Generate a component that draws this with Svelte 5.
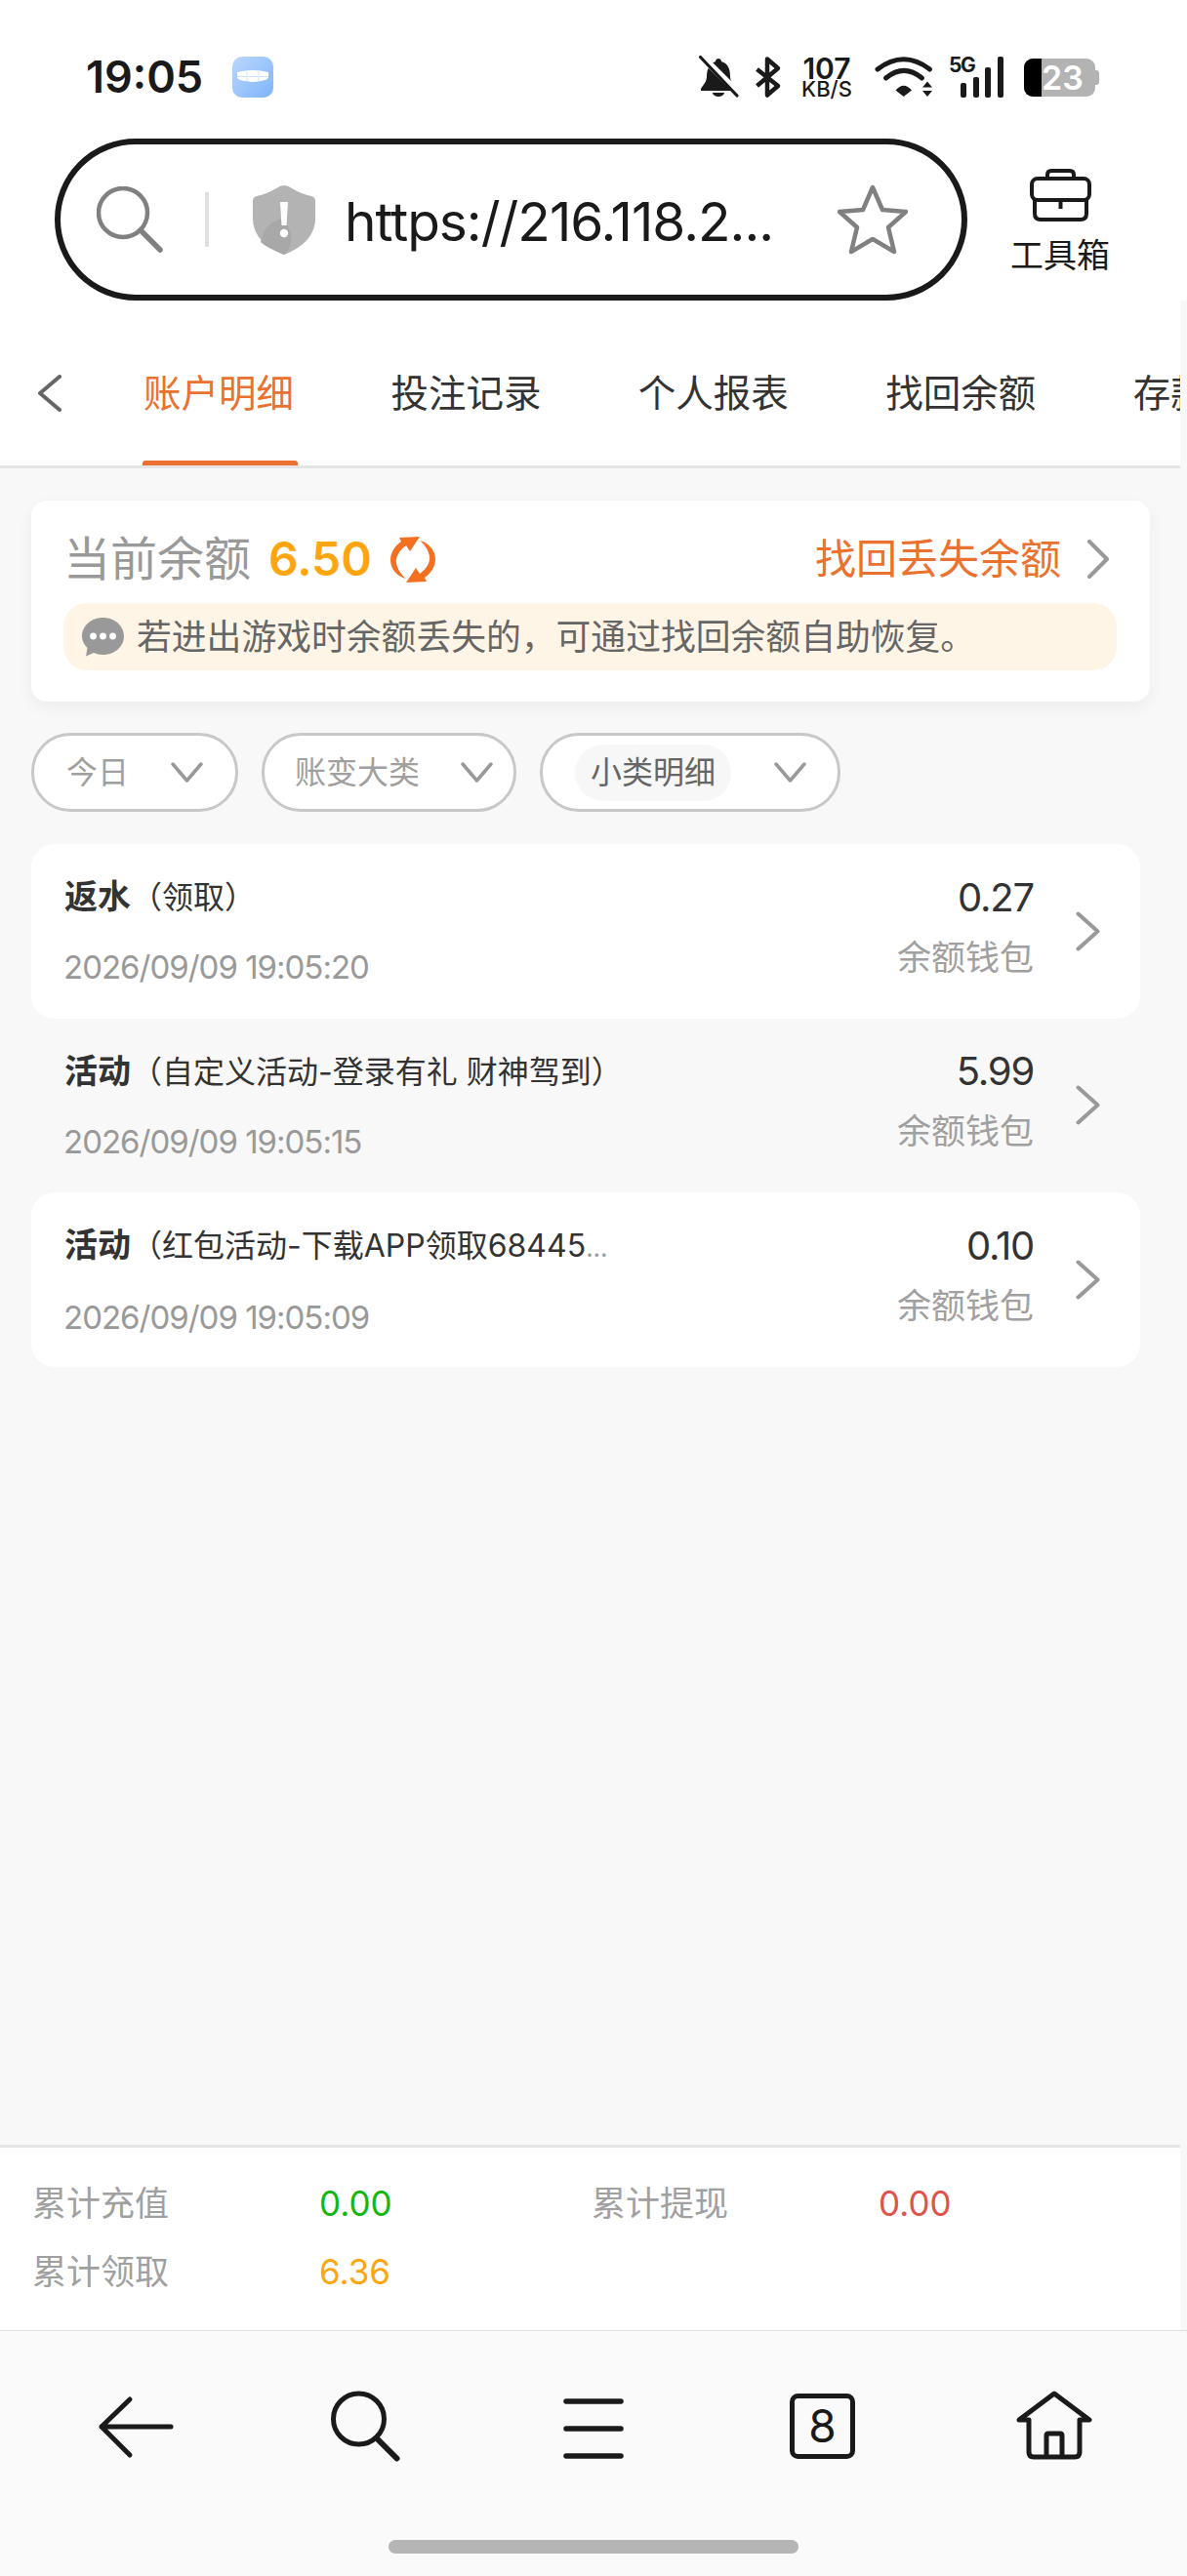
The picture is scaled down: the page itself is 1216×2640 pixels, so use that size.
<script>
	const tabs = ['账户明细', '投注记录', '个人报表', '找回余额', '存款记录'];

	const records = [
		{ kind: '返水', detail: '（领取）', more: false, time: '2026/09/09 19:05:20', amount: '0.27', plain: false },
		{ kind: '活动', detail: '（自定义活动-登录有礼 财神驾到）', more: false, time: '2026/09/09 19:05:15', amount: '5.99', plain: true },
		{ kind: '活动', detail: '（红包活动-下载APP领取68445', more: true, time: '2026/09/09 19:05:09', amount: '0.10', plain: false }
	];

	const filters = [
		{ label: '今日', active: false },
		{ label: '账变大类', active: false },
		{ label: '小类明细', active: true }
	];
</script>

<div class="page">
	<header class="top">
		<div class="status">
			<span class="clock">19:05</span>
			<svg class="app-icon" width="42" height="42" viewBox="0 0 42 42">
				<defs>
					<linearGradient id="appbg" x1="0" y1="0" x2="1" y2="1">
						<stop offset="0" stop-color="#bcd8fb" />
						<stop offset="1" stop-color="#7db4fb" />
					</linearGradient>
				</defs>
				<rect width="42" height="42" rx="10" fill="url(#appbg)" />
				<path d="M5 16 Q21 12 37 16 V22 Q34 25 21 26 Q8 25 5 22Z" fill="#fff" />
				<path d="M5 20.5 H37 M15 15 V25 M27 15 V25" stroke="#cfe2fb" stroke-width="1" fill="none" />
			</svg>
			<div class="sys">
				<svg width="40" height="42" viewBox="0 0 40 42">
					<path d="M20 2 C21.5 2 23 3 23 5 C30 7 32 13 32 20 C32 26 35 28 38 33 V35 H2 V33 C5 28 8 26 8 20 C8 13 11 7 17 5 C17 3 18.5 2 20 2Z M14 37 H26 A6 4 0 0 1 14 37Z" fill="#1a1a1a" />
					<path d="M2 -1 L42 39" stroke="#fff" stroke-width="7" />
					<path d="M1.5 0.5 L39 40" stroke="#1a1a1a" stroke-width="3.2" stroke-linecap="round" />
				</svg>
				<svg width="27" height="42" viewBox="0 0 27 42">
					<path d="M2.5 13 L24 30 L13 39.5 V2.5 L24 12 L2.5 30" fill="none" stroke="#1a1a1a" stroke-width="4.5" stroke-linejoin="round" />
				</svg>
				<div class="speed">
					<span class="speed-num">107</span>
					<span class="speed-unit">KB/S</span>
				</div>
				<svg width="61" height="42" viewBox="0 0 61 42">
					<path d="M5 13 Q31.7 -7.4 58.5 13 M13.5 22 Q32 6.7 50.5 22" fill="none" stroke="#1a1a1a" stroke-width="5" stroke-linecap="round" />
					<path d="M23.5 34.5 Q31.7 25 40 34.5 L31.7 41 Z" fill="#1a1a1a" />
					<path d="M51 31.5 L56 25.5 L61 31.5Z M51 35 H61 L56 41Z" fill="#1a1a1a" />
				</svg>
				<svg width="56" height="42" viewBox="0 0 56 42">
					<text x="0" y="15.5" class="five-g">5G</text>
					<rect x="12" y="27" width="6" height="15" rx="2" fill="#1a1a1a" />
					<rect x="25" y="21" width="6" height="21" rx="2" fill="#1a1a1a" />
					<rect x="37" y="11" width="6" height="31" rx="2" fill="#1a1a1a" />
					<rect x="50" y="0" width="6" height="42" rx="2" fill="#1a1a1a" />
				</svg>
				<svg width="81" height="42" viewBox="0 0 81 42">
					<clipPath id="batfill"><rect x="4" y="2" width="18" height="39" /></clipPath>
					<rect x="4" y="2" width="73" height="39" rx="9" fill="#b3b3b3" />
					<path d="M77 14 H78 Q81 14 81 17 V26 Q81 29 78 29 H77Z" fill="#b3b3b3" />
					<rect x="4" y="2" width="73" height="39" rx="9" fill="#000" clip-path="url(#batfill)" />
					<text x="43.5" y="34" text-anchor="middle" class="bat-num">23</text>
				</svg>
			</div>
		</div>

		<div class="url-row">
			<div class="pill">
				<svg width="68" height="68" viewBox="0 0 68 68">
					<circle cx="27" cy="27" r="25" fill="none" stroke="#808080" stroke-width="4.5" />
					<path d="M45 45 L65 65" stroke="#808080" stroke-width="5.5" stroke-linecap="round" />
				</svg>
				<span class="divider"></span>
				<svg width="64" height="71" viewBox="0 0 64 71">
					<path d="M32 0 Q36 0 40 3 Q50 9 60 11 Q64 12 64 16 V34 C64 52 50 64 32 71 C14 64 0 52 0 34 V16 Q0 12 4 11 Q14 9 24 3 Q28 0 32 0Z" fill="#b3b3b3" />
					<path d="M8 58 C10 44 20 36 30 34 C40 44 44 60 32 71 C22 67 14 63 8 58Z" fill="#a8a8a8" />
					<path d="M28 17 H36 L34.5 41 H29.5Z" fill="#fff" />
					<circle cx="32" cy="49" r="4.2" fill="#fff" />
				</svg>
				<span class="url">https://216.118.2...</span>
				<svg class="star" width="72" height="73" viewBox="0 0 72 73">
					<path d="M36 3 L46 26 L70 28 L52 44 L58 69 L36 56 L14 69 L20 44 L2 28 L26 26 Z" fill="none" stroke="#808080" stroke-width="4.5" stroke-linejoin="round" />
				</svg>
			</div>
			<div class="toolbox">
				<svg width="63" height="54" viewBox="0 0 63 54">
					<path d="M18 9 V6 Q18 2 22 2 H41 Q45 2 45 6 V9" fill="none" stroke="#1a1a1a" stroke-width="4" />
					<rect x="2" y="10" width="59" height="22" rx="6" fill="none" stroke="#1a1a1a" stroke-width="4" />
					<path d="M5 32 V46 Q5 52 11 52 H52 Q58 52 58 46 V32 M31.5 32 V41" fill="none" stroke="#1a1a1a" stroke-width="4" />
				</svg>
				<span>工具箱</span>
			</div>
		</div>
	</header>

	<nav class="tabs">
		<svg class="tab-back" width="25" height="38" viewBox="0 0 25 38">
			<path d="M23 2 L3 19 L23 36" fill="none" stroke="#666" stroke-width="4" stroke-linecap="round" stroke-linejoin="round" />
		</svg>
		{#each tabs as tab, i}
			<span class="tab" class:active={i === 0}>{tab}</span>
		{/each}
	</nav>

	<main class="body">
		<section class="balance">
			<div class="balance-head">
				<span class="balance-label">当前余额</span>
				<span class="balance-num">6.50</span>
				<svg class="refresh" width="48" height="49" viewBox="0 0 48 49">
					<path d="M12 6 L10 2 L31 1 L21 16 L17 10 C10 15 6 22 7 28 C8 34 12 40 17 44 C8 42 1 34 1 25 C1 17 6 10 12 6 Z" fill="#f37021" />
					<path d="M36 43 L38 47 L17 48 L27 33 L31 39 C38 34 42 27 41 21 C40 15 36 9 31 5 C40 7 47 15 47 24 C47 32 42 39 36 43Z" fill="#f37021" />
				</svg>
				<span class="recover">找回丢失余额</span>
				<svg width="24" height="40" viewBox="0 0 24 40">
					<path d="M3 2 L21 20 L3 38" fill="none" stroke="#999" stroke-width="4" stroke-linecap="round" stroke-linejoin="round" />
				</svg>
			</div>
			<div class="notice">
				<svg width="43" height="40" viewBox="0 0 43 40">
					<path d="M21.5 0 C33.5 0 43 8.5 43 19 C43 29.5 33.5 38 21.5 38 C18 38 15 37.3 12 36 L4 39.5 L5.5 31 C2 27.5 0 23.5 0 19 C0 8.5 9.5 0 21.5 0Z" fill="#999" />
					<circle cx="11.5" cy="19" r="3.4" fill="#fff" />
					<circle cx="21.5" cy="19" r="3.4" fill="#fff" />
					<circle cx="31.5" cy="19" r="3.4" fill="#fff" />
				</svg>
				<span>若进出游戏时余额丢失的，可通过找回余额自助恢复。</span>
			</div>
		</section>

		<div class="filters">
			{#each filters as filter}
				<div class="filter">
					<span class="filter-label" class:active={filter.active}>{filter.label}</span>
					<svg width="33" height="21" viewBox="0 0 33 21">
						<path d="M2 2 L16.5 19 L31 2" fill="none" stroke="#999" stroke-width="3.5" stroke-linecap="round" stroke-linejoin="round" />
					</svg>
				</div>
			{/each}
		</div>

		<div class="records">
			{#each records as rec}
				<div class="record" class:plain={rec.plain}>
					<div class="record-main">
						<div class="record-title">
							<b>{rec.kind}</b><span>{rec.detail}</span>{#if rec.more}<span class="dots">...</span>{/if}
						</div>
						<div class="record-time">{rec.time}</div>
					</div>
					<div class="record-side">
						<div class="record-amount">{rec.amount}</div>
						<div class="record-wallet">余额钱包</div>
					</div>
					<svg class="record-arrow" width="25" height="41" viewBox="0 0 25 41">
						<path d="M2.5 2.5 L22.5 20.5 L2.5 38.5" fill="none" stroke="#999" stroke-width="4" stroke-linecap="round" stroke-linejoin="round" />
					</svg>
				</div>
			{/each}
		</div>

		<section class="totals">
			<span class="t-label">累计充值</span>
			<span class="t-num green">0.00</span>
			<span class="t-label">累计提现</span>
			<span class="t-num red">0.00</span>
			<span class="t-label">累计领取</span>
			<span class="t-num orange">6.36</span>
		</section>
	</main>

	<footer class="nav">
		<div class="nav-icons">
			<svg width="80" height="80" viewBox="0 0 80 80">
				<path d="M33 9 L4 37 L33 66 M4 37 H75" fill="none" stroke="#1a1a1a" stroke-width="5" stroke-linecap="round" stroke-linejoin="round" />
			</svg>
			<svg width="80" height="80" viewBox="0 0 80 80">
				<circle cx="32.5" cy="29" r="26" fill="none" stroke="#1a1a1a" stroke-width="5" />
				<path d="M51 49 L71.5 69.5" stroke="#1a1a1a" stroke-width="6" stroke-linecap="round" />
			</svg>
			<svg width="80" height="80" viewBox="0 0 80 80">
				<path d="M10 11 H66 M10 39 H66 M10 67 H66" stroke="#1a1a1a" stroke-width="5.5" stroke-linecap="round" />
			</svg>
			<svg width="80" height="80" viewBox="0 0 80 80">
				<rect x="6.5" y="5.5" width="62" height="62" rx="6" fill="none" stroke="#1a1a1a" stroke-width="5" />
				<text x="37.5" y="53" text-anchor="middle" class="tab-count">8</text>
			</svg>
			<svg width="80" height="80" viewBox="0 0 80 80">
				<path d="M4 30 L40 3 L76 30 H66 V63 Q66 68 61 68 H19 Q14 68 14 63 V30 Z" fill="none" stroke="#1a1a1a" stroke-width="5" stroke-linejoin="round" />
				<path d="M32 68 V46 Q32 44 34 44 H46 Q48 44 48 46 V68" fill="none" stroke="#1a1a1a" stroke-width="5" />
			</svg>
		</div>
		<div class="home-bar"></div>
	</footer>
</div>

<style>
	:global(body) {
		margin: 0;
	}

	.page {
		width: 1216px;
		height: 2640px;
		display: flex;
		flex-direction: column;
		overflow: hidden;
		background: #f8f8f8;
		font-family: Inter, 'Noto Sans CJK SC', sans-serif;
	}

	.top {
		background: #fff;
		height: 308px;
		flex: none;
	}

	.status {
		height: 42px;
		padding: 58px 90px 42px 88px;
		display: flex;
		align-items: center;
	}

	.clock {
		font-size: 45px;
		font-weight: 600;
		color: #1a1a1a;
		line-height: 42px;
	}

	.app-icon {
		margin-left: 30px;
	}

	.sys {
		margin-left: auto;
		display: flex;
		align-items: center;
		gap: 17px;
	}

	.sys svg {
		display: block;
		overflow: visible;
	}

	.speed {
		width: 60px;
		display: flex;
		flex-direction: column;
		align-items: center;
		color: #1a1a1a;
	}

	.speed-num {
		font-size: 30px;
		font-weight: 600;
		line-height: 25px;
	}

	.speed-unit {
		font-size: 22px;
		font-weight: 500;
		line-height: 17px;
	}

	.five-g {
		font-family: Inter, sans-serif;
		font-size: 21px;
		font-weight: 700;
		letter-spacing: -1.5px;
		fill: #1a1a1a;
	}

	.bat-num {
		font-family: Inter, sans-serif;
		font-size: 34px;
		font-weight: 600;
		fill: #fff;
	}

	.url-row {
		display: flex;
		align-items: flex-start;
		padding-left: 56px;
	}

	.pill {
		width: 935px;
		height: 166px;
		flex: none;
		box-sizing: border-box;
		border: 6px solid #1a1a1a;
		border-radius: 83px;
		display: flex;
		align-items: center;
		padding: 0 55px 0 37px;
		background: #fff;
	}

	.pill svg {
		flex: none;
	}

	.divider {
		width: 4px;
		height: 56px;
		margin: 0 45px 0 43px;
		background: #e0e0e0;
		flex: none;
	}

	.url {
		margin: 4px 0 0 30px;
		font-size: 55px;
		letter-spacing: -1px;
		color: #1a1a1a;
		white-space: nowrap;
	}

	.star {
		margin-left: auto;
	}

	.toolbox {
		margin: 31px 0 0 44px;
		width: 102px;
		flex: none;
		display: flex;
		flex-direction: column;
		align-items: center;
		color: #1a1a1a;
	}

	.toolbox span {
		margin-top: 18px;
		font-size: 34px;
		line-height: 34px;
		white-space: nowrap;
	}

	.tabs {
		width: 1209px;
		height: 172px;
		flex: none;
		box-sizing: border-box;
		padding: 21px 0 0 38px;
		background: #fff;
		border-bottom: 3px solid #e5e5e5;
		display: flex;
		align-items: center;
		overflow: hidden;
	}

	.tab-back {
		flex: none;
		margin-right: 84px;
	}

	.tab {
		flex: none;
		position: relative;
		font-size: 38.5px;
		line-height: 44px;
		color: #333;
		margin-right: 99.4px;
	}

	.tab.active {
		color: #ea7130;
	}

	.tab.active::after {
		content: '';
		position: absolute;
		left: -1px;
		right: -4px;
		top: 91px;
		height: 5px;
		border-radius: 3px 3px 0 0;
		background: #ea7130;
	}

	.body {
		flex: 1;
		display: flex;
		flex-direction: column;
		min-height: 0;
	}

	.balance {
		width: 1146px;
		height: 206px;
		box-sizing: border-box;
		margin: 33px 0 0 32px;
		padding: 36px 34px 0 33px;
		background: #fff;
		border-radius: 16px;
		box-shadow: 0 6px 16px rgba(0, 0, 0, 0.05);
	}

	.balance-head {
		height: 48px;
		display: flex;
		align-items: center;
		padding-right: 7px;
	}

	.balance-label {
		font-size: 48px;
		line-height: 48px;
		color: #999;
	}

	.balance-num {
		margin-left: 18px;
		font-size: 48px;
		font-weight: 600;
		line-height: 48px;
		color: #ffa510;
	}

	.refresh {
		margin-left: 18px;
	}

	.recover {
		margin-left: auto;
		margin-right: 26px;
		font-size: 42px;
		line-height: 48px;
		color: #ea7130;
	}

	.notice {
		margin-top: 21px;
		height: 69px;
		border-radius: 24px;
		background: #fff5e7;
		display: flex;
		align-items: center;
		padding-left: 19px;
		gap: 13px;
		font-size: 35.8px;
		color: #666;
	}

	.notice span {
		line-height: 44px;
	}

	.filters {
		margin: 32px 0 0 32px;
		display: flex;
		gap: 24px;
	}

	.filter {
		height: 81px;
		box-sizing: border-box;
		border: 3px solid #c8c8c8;
		border-radius: 40px;
		background: #fff;
		display: flex;
		align-items: center;
		justify-content: space-between;
		width: 212px;
		padding: 0 33px;
	}

	.filter:nth-child(2) {
		width: 261px;
		padding: 0 21px 0 31px;
	}

	.filter:nth-child(3) {
		width: 308px;
		padding: 0 32px 0 33px;
	}

	.filter-label {
		font-size: 32px;
		line-height: 58px;
		color: #a0a0a0;
	}

	.filter-label.active {
		color: #666;
		background: #f7f7f7;
		border-radius: 29px;
		padding: 0 16px;
	}

	.records {
		margin: 33px 0 0 32px;
		width: 1136px;
	}

	.record {
		height: 178.67px;
		box-sizing: border-box;
		padding: 0 41px 0 34px;
		display: flex;
		align-items: center;
		background: #fff;
		border-radius: 24px;
	}

	.record.plain {
		background: none;
	}

	.record-main {
		flex: 1;
		min-width: 0;
		margin-top: 2px;
	}

	.record-title {
		font-size: 32px;
		line-height: 44px;
		color: #333;
		white-space: nowrap;
	}

	.record-title b {
		font-size: 34px;
		font-weight: 700;
	}

	.dots {
		color: #999;
		font-size: 26px;
	}

	.record-time {
		margin: 27px 0 0 -1px;
		font-size: 33px;
		letter-spacing: -1px;
		line-height: 44px;
		color: #999;
	}

	.record-side {
		text-align: right;
		margin: 0 43px 8px 0;
	}

	.record-amount {
		font-size: 40px;
		letter-spacing: -1.2px;
		line-height: 44px;
		color: #333;
	}

	.record-wallet {
		margin-top: 17px;
		font-size: 35px;
		line-height: 44px;
		color: #a0a0a0;
	}

	.record-arrow {
		flex: none;
	}

	.totals {
		margin-top: auto;
		width: 1209px;
		height: 190px;
		box-sizing: border-box;
		border-top: 3px solid #e5e5e5;
		background: #fff;
		padding: 22px 0 0 33px;
		display: grid;
		grid-template-columns: 294px 279px 294px 1fr;
		grid-auto-rows: 70px;
		align-items: center;
	}

	.t-label {
		font-size: 35px;
		line-height: 44px;
		color: #a0a0a0;
	}

	.t-num {
		font-size: 35px;
		line-height: 44px;
	}

	.green {
		color: #13b713;
	}

	.red {
		color: #e0534a;
	}

	.orange {
		color: #ffa510;
	}

	.nav {
		height: 252px;
		flex: none;
		box-sizing: border-box;
		border-top: 1px solid #e0e0e0;
		background: #fafafa;
		padding-top: 61px;
	}

	.nav-icons {
		display: flex;
		gap: 155px;
		padding-left: 100px;
	}

	.nav-icons svg {
		display: block;
	}

	.tab-count {
		font-family: Inter, sans-serif;
		font-size: 46px;
		fill: #1a1a1a;
	}

	.home-bar {
		width: 420px;
		height: 14px;
		margin: 73px auto 0;
		border-radius: 7px;
		background: #b5b5b5;
	}
</style>
